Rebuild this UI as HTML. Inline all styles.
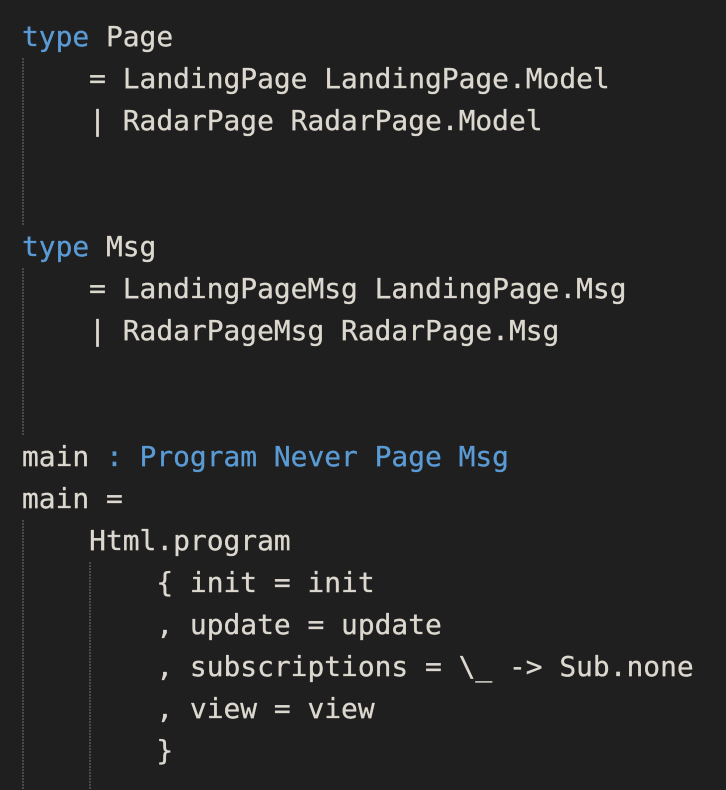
<!DOCTYPE html>
<html><head><style>
html,body{margin:0;padding:0;background:#1f1f1f;width:726px;height:790px;overflow:hidden}
.c{position:absolute;left:22px;top:16px;font-family:"DejaVu Sans Mono","Liberation Mono",monospace;font-size:27.9px;line-height:42px;color:#dcd8cf;white-space:pre;-webkit-text-stroke:0.3px #dcd8cf}
.k{color:#5a9bd5;-webkit-text-stroke:0.3px #5a9bd5}
.g{position:absolute;width:2px;background:repeating-linear-gradient(#4a4a4a 0 2px,transparent 2px 3px)}
</style></head><body>
<div class="g" style="left:22px;top:58px;height:168px"></div>
<div class="g" style="left:22px;top:268px;height:168px"></div>
<div class="g" style="left:22px;top:520px;height:270px"></div>
<div class="g" style="left:89px;top:562px;height:228px"></div>
<div class="c"><span class="k">type</span> Page
    = LandingPage LandingPage.Model
    | RadarPage RadarPage.Model


<span class="k">type</span> Msg
    = LandingPageMsg LandingPage.Msg
    | RadarPageMsg RadarPage.Msg


main <span class="k">: Program Never Page Msg</span>
main =
    Html.program
        { init = init
        , update = update
        , subscriptions = \_ -&gt; Sub.none
        , view = view
        }
</div>
</body></html>
